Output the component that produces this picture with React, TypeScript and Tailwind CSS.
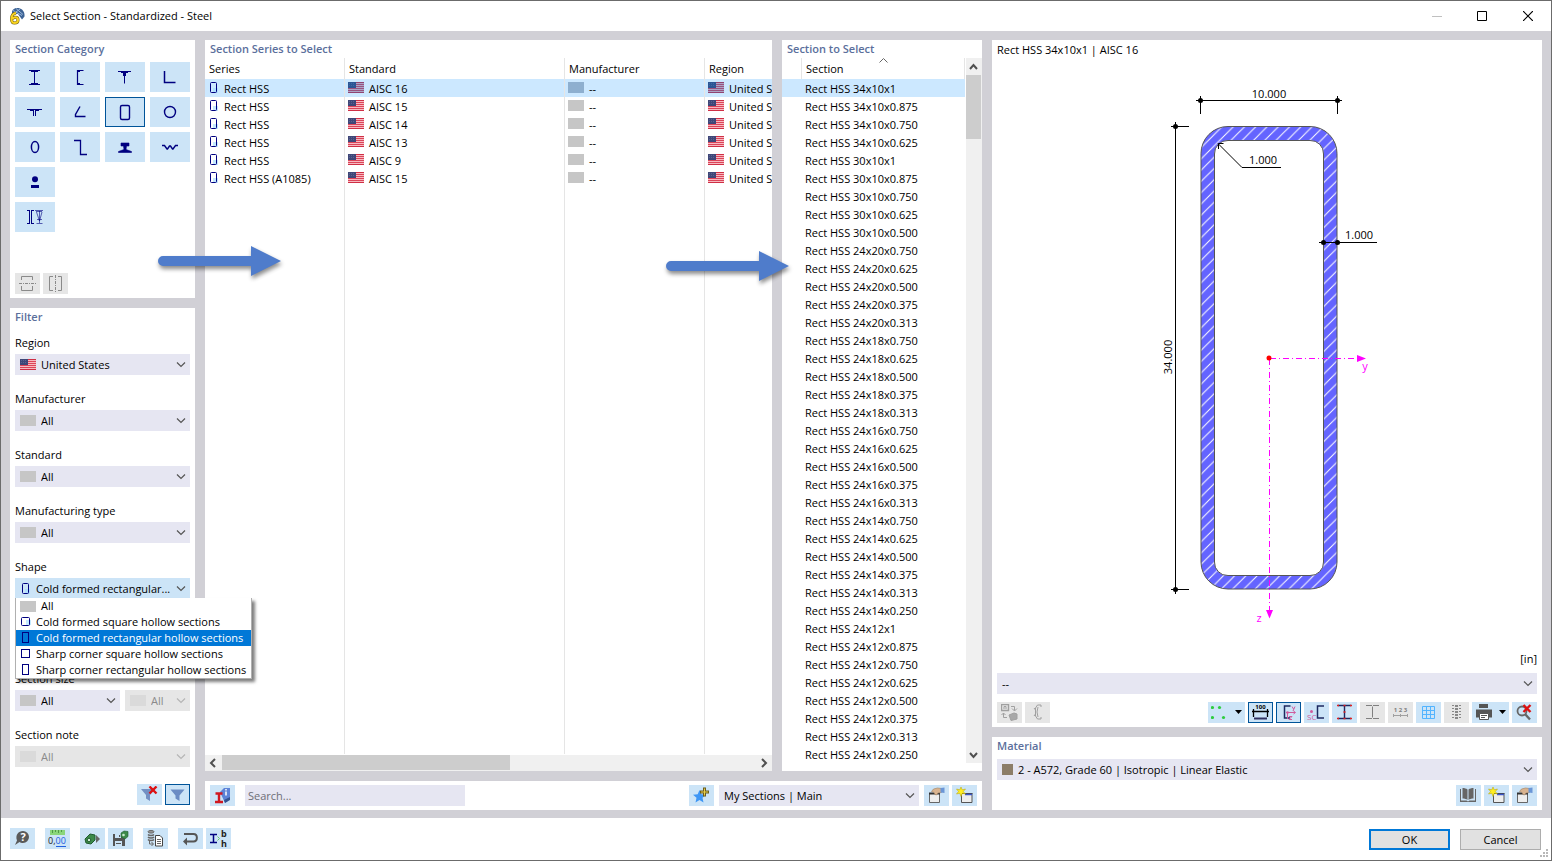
import React, { useState } from "react";

interface SeriesRecord {
  series: string;
  standard: string;
}

const seriesRecords: SeriesRecord[] = [
  { series: "Rect HSS", standard: "AISC 16" },
  { series: "Rect HSS", standard: "AISC 15" },
  { series: "Rect HSS", standard: "AISC 14" },
  { series: "Rect HSS", standard: "AISC 13" },
  { series: "Rect HSS", standard: "AISC 9" },
  { series: "Rect HSS (A1085)", standard: "AISC 15" },
];

const sizes = [
  "34x10x1", "34x10x0.875", "34x10x0.750", "34x10x0.625",
  "30x10x1", "30x10x0.875", "30x10x0.750", "30x10x0.625", "30x10x0.500",
  "24x20x0.750", "24x20x0.625", "24x20x0.500", "24x20x0.375", "24x20x0.313",
  "24x18x0.750", "24x18x0.625", "24x18x0.500", "24x18x0.375", "24x18x0.313",
  "24x16x0.750", "24x16x0.625", "24x16x0.500", "24x16x0.375", "24x16x0.313",
  "24x14x0.750", "24x14x0.625", "24x14x0.500", "24x14x0.375", "24x14x0.313", "24x14x0.250",
  "24x12x1", "24x12x0.875", "24x12x0.750", "24x12x0.625", "24x12x0.500", "24x12x0.375", "24x12x0.313", "24x12x0.250",
];

const NAVY = "#000080";

/* ---------- small pictures ---------- */

const Flag = ({ tinted = false }: { tinted?: boolean }) => (
  <svg width="16" height="11" viewBox="0 0 16 11" className="block shrink-0">
    <rect width="16" height="11" fill="#f7b9c0" />
    {[0, 2, 4, 6, 8, 10].map((y) => (
      <rect key={y} y={y} width="16" height="1" fill={y === 0 || y === 10 ? "#cf2f45" : "#dc4459"} />
    ))}
    <rect width="8" height="6" fill="#3f4778" />
    <path d="M1 1.5h6M1 3.5h6" stroke="#5a6290" strokeDasharray="1 1" />
    {tinted && <rect width="16" height="11" fill="#0078d7" opacity="0.3" />}
  </svg>
);

const Swatch = ({ color = "#c6c6c6" }: { color?: string }) => (
  <svg width="16" height="11" className="block shrink-0">
    <rect width="16" height="11" fill={color} />
  </svg>
);

const Hollow = ({ w, h, round = false, x = 0 }: { w: number; h: number; round?: boolean; x?: number }) => (
  <svg width={w + x + 2} height="12" className="block shrink-0">
    {round && <rect x={x + w - 4} y={h - 5} width="5" height="5" fill="#9fdcff" opacity="0.6" />}
    <rect x={x + 0.5} y={(11 - h) / 2 + 0.5} width={w - 1} height={h - 1} rx={round ? 1 : 0} fill="none" stroke={NAVY} />
  </svg>
);

const Chevron = ({ color = "#555" }: { color?: string }) => (
  <svg width="10" height="6" viewBox="0 0 10 6" fill="none" className="pointer-events-none absolute top-2 right-1">
    <path d="M1 0.5l4 4 4-4" stroke={color} strokeWidth="1.2" />
  </svg>
);

const HandWindow = () => (
  <svg width="17" height="17" viewBox="0 0 17 17" fill="none">
    <path d="M1.5 6.5h10v9h-10z" fill="#eee" stroke="#666" />
    <path d="M1 6.5h11" stroke="#333" strokeWidth="2" />
    <path d="M3.5 4.5l2-2.5 4-1 4 .5v4l-3.5.5L8.5 8 7 7.5l-1-2z" fill="#d9b38f" stroke="#a08060" strokeWidth="0.6" />
    <path d="M12.5 1L16.5 0.5v5.5l-4-.5z" fill="#6b96d6" />
  </svg>
);

const StarWindow = () => (
  <svg width="17" height="17" viewBox="0 0 17 17" fill="none">
    <path d="M5.5 6.5h10.5v9h-10.5z" fill="#eee" stroke="#555" />
    <path d="M6 6.5h10.5" stroke="#444" />
    <path d="M9 7.5h7" stroke="#3a56c8" strokeWidth="1.5" />
    <path d="M5 0l1.200 2.800L9.500 2 7.300 4.500 9.500 7 6.300 6.300 5 9.500 3.800 6.300 0.500 7l2-2.500L0.500 2l3.300.8z" fill="#ffee22" stroke="#b5a000" strokeWidth="0.5" />
  </svg>
);

const RedCross = ({ x, y }: { x: number; y: number }) => (
  <path d={`M${x} ${y}l7 7m0-7l-7 7`} stroke="#dd1111" strokeWidth="2.4" />
);

/* ---------- controls ---------- */

interface IconButtonProps {
  label: string;
  active?: boolean;
  disabled?: boolean;
  wide?: boolean;
  children: React.ReactNode;
}

const IconButton = ({ label, active, disabled, wide, children }: IconButtonProps) => (
  <button
    aria-label={label}
    disabled={disabled}
    className={`flex h-[21px] shrink-0 items-center justify-center ${wide ? "w-[37px] gap-1" : "w-[25px]"} ${
      disabled ? "bg-[#e6e6e6]" : "bg-[#cce4f7]"
    } ${active ? "border border-[#005499]" : ""}`}
  >
    {children}
    {wide && (
      <svg width="7" height="5" className="shrink-0">
        <path d="M0 0h7L3.5 4z" fill="#000" />
      </svg>
    )}
  </button>
);

interface PickerProps {
  id: string;
  label?: string;
  value: string;
  icon?: React.ReactNode;
  disabled?: boolean;
  open?: boolean;
  indent?: string;
}

const Picker = ({ id, label, value, icon, disabled, open, indent = "pl-[26px]" }: PickerProps) => (
  <div className="relative w-full">
    {icon && <span className="pointer-events-none absolute top-[5px] left-[5px]">{icon}</span>}
    <select
      id={id}
      aria-label={label}
      disabled={disabled}
      className={`block h-[21px] w-full appearance-none rounded-none pt-0.5 pr-4 opacity-100 outline-none ${indent} ${
        disabled ? "bg-[#e6e6e6] text-[#8a8a8a]" : open ? "bg-[#cce4f7]" : "bg-[#e6e6f2]"
      }`}
    >
      <option>{value}</option>
    </select>
    <Chevron color={disabled ? "#b5b5b5" : "#555"} />
  </div>
);

const Field = ({ id, title, children }: { id: string; title: string; children: React.ReactNode }) => (
  <div>
    <label htmlFor={id} className="block h-5 leading-[18px]">
      {title}
    </label>
    {children}
  </div>
);

const PanelTitle = ({ children }: { children: React.ReactNode }) => (
  <h2 className="h-[18px] shrink-0 px-[5px] leading-[18px] font-semibold text-[#5b6f9c]">{children}</h2>
);

/* ---------- section category ---------- */

const categories: { label: string; art: React.ReactNode }[] = [
  { label: "I sections", art: <path d="M5 3.5h11M5 17.5h11M7 4.5h7M7 16.5h7M10.5 4v13" /> },
  { label: "Channels", art: <path d="M14.5 3.5H8.5v14H14.5M9 4.5h2M9 16.5h2" strokeWidth="1.2" /> },
  { label: "T sections", art: <path d="M4 4.5h13M7 5.5h7M10.5 5v11.5M9.5 6v3M11.5 6v3" /> },
  { label: "Angles", art: <path d="M5.5 4v11.5H16.5" strokeWidth="1.5" /> },
  { label: "Double T", art: <path d="M3 7.5h15M6 8.5h3M12 8.5h3M9.5 8v6M11.5 8v6" /> },
  { label: "Bulb angles", art: <path d="M11 4.5L6.5 12.5v2H16.5" strokeWidth="1.4" /> },
  { label: "Hollow sections", art: <rect x="6.500" y="3.500" width="9" height="14" rx="1.500" strokeWidth="1.4" /> },
  { label: "Pipes", art: <circle cx="11" cy="10" r="5.5" strokeWidth="1.4" /> },
  { label: "Ovals", art: <ellipse cx="11" cy="10" rx="3.6" ry="5.6" strokeWidth="1.5" /> },
  { label: "Z sections", art: <path d="M5 3.5h6.5v14H18" strokeWidth="1.3" /> },
  { label: "Rails", art: <path d="M7 6h8v3h-2.500l-.5 3.500 5.500 2v1H4.500v-1l5.500-2-.5-3.500H7z" fill={NAVY} strokeWidth="0.6" /> },
  { label: "Corrugated sheets", art: <path d="M3 8.500h2.500l2.500 3.500h.5L10.500 9h1l2 3h.5l2.500-3.500H19" strokeWidth="1.4" /> },
  {
    label: "Round and flat bars",
    art: (
      <g fill={NAVY} stroke="none">
        <circle cx="11" cy="7.3" r="3" />
        <path d="M7 13h8v3H7z" />
      </g>
    ),
  },
  {
    label: "Built-up sections",
    art: (
      <>
        <path d="M3 3.5h3M7 3.5h3M3 16.5h3M7 16.5h3M5.5 4v12M7.5 4v12" />
        <path d="M11 3.5h8M12 4.5h6M12.5 5l3 9 2.5-9M15.5 4v12M12.5 16.5h6M13 12.5h5" opacity="0.6" />
      </>
    ),
  },
];

const CategoryPanel = () => {
  const [selected, setSelected] = useState(6);

  return (
    <section className="flex h-[258px] shrink-0 flex-col bg-white pb-1">
      <PanelTitle>Section Category</PanelTitle>
      <div className="mt-1 grid grid-cols-4 gap-[5px] px-[5px]">
        {categories.map((category, index) => (
          <button
            key={category.label}
            aria-label={category.label}
            onClick={() => setSelected(index)}
            className={`flex h-[30px] items-center justify-center bg-[#cce4f7] ${
              selected === index ? "border border-[#005499]" : ""
            } ${index === 13 ? "col-start-1" : ""}`}
          >
            <svg width="22" height="20" fill="none" stroke={NAVY}>
              {category.art}
            </svg>
          </button>
        ))}
      </div>
      <div className="mt-auto flex gap-[3px] px-[5px]">
        <IconButton label="Mirror about y" disabled>
          <svg width="17" height="17" fill="none" stroke="#8a8a8a">
            <path d="M2.5 5V1.5h11V5M2.5 11v4.5h11V11" />
            <path d="M0 8.5h17" strokeDasharray="3 1 1 1" />
          </svg>
        </IconButton>
        <IconButton label="Mirror about z" disabled>
          <svg width="17" height="17" fill="none" stroke="#8a8a8a">
            <path d="M6 1.5H2.5v14H6M11 1.5h3.5v14H11" />
            <path d="M8.5 0v17" strokeDasharray="3 1 1 1" />
          </svg>
        </IconButton>
      </div>
    </section>
  );
};

/* ---------- filter ---------- */

const shapes = [
  { name: "All", icon: <Swatch />, gap: "gap-[5px]" },
  { name: "Cold formed square hollow sections", icon: <Hollow w={9} h={9} round x={1} />, gap: "gap-1" },
  { name: "Cold formed rectangular hollow sections", icon: <Hollow w={7} h={11} x={2} />, gap: "gap-[5px]" },
  { name: "Sharp corner square hollow sections", icon: <Hollow w={9} h={9} x={1} />, gap: "gap-1" },
  { name: "Sharp corner rectangular hollow sections", icon: <Hollow w={7} h={11} x={2} />, gap: "gap-[5px]" },
];

const FilterPanel = () => (
  <section className="flex min-h-0 flex-1 flex-col bg-white pb-[5px]">
    <PanelTitle>Filter</PanelTitle>
    <div className="mt-2 flex flex-col gap-[15px] px-[5px]">
      <Field id="region" title="Region">
        <Picker id="region" value="United States" icon={<Flag />} />
      </Field>
      <Field id="manufacturer" title="Manufacturer">
        <Picker id="manufacturer" value="All" icon={<Swatch />} />
      </Field>
      <Field id="standard" title="Standard">
        <Picker id="standard" value="All" icon={<Swatch />} />
      </Field>
      <Field id="type" title="Manufacturing type">
        <Picker id="type" value="All" icon={<Swatch />} />
      </Field>
      <div className="relative mb-14">
        <Field id="shape" title="Shape">
          <Picker id="shape" value="Cold formed rectangular..." icon={<Hollow w={7} h={11} round x={2} />} indent="pl-[21px]" open />
        </Field>
        <ul
          role="listbox"
          aria-label="Shape"
          className="absolute top-10 left-0 z-20 border border-t-0 border-[#b0b0b0] bg-white shadow-[3px_3px_3px_rgba(0,0,0,0.5)]"
        >
          {shapes.map((shape, index) => (
            <li
              key={shape.name}
              role="option"
              aria-selected={index === 2}
              className={`flex h-4 items-center pr-[5px] pl-1 leading-4 whitespace-nowrap ${shape.gap} ${
                index === 2 ? "bg-[#0078d7] text-white" : ""
              }`}
            >
              {shape.icon}
              {shape.name}
            </li>
          ))}
        </ul>
      </div>
      <Field id="size-min" title="Section size">
        <div className="flex gap-[5px]">
          <div className="w-[105px]">
            <Picker id="size-min" value="All" icon={<Swatch />} />
          </div>
          <div className="flex-1">
            <Picker id="size-max" label="Largest section size" value="All" icon={<Swatch color="#dadada" />} disabled />
          </div>
        </div>
      </Field>
      <Field id="note" title="Section note">
        <Picker id="note" value="All" icon={<Swatch color="#dadada" />} disabled />
      </Field>
    </div>
    <div className="mt-auto flex justify-end gap-[3px] px-[5px]">
      <IconButton label="Clear filter">
        <svg width="17" height="17" fill="none">
          <path d="M0 3h14L9 9v6l-4-2.5V9z" fill="#7390c4" />
          <RedCross x={8.5} y={0.5} />
        </svg>
      </IconButton>
      <IconButton label="Filter" active>
        <svg width="15" height="15">
          <path d="M0.5 2.5h14L9.5 8.5v5.5l-4-2.5v-3z" fill="#6b8cc4" />
        </svg>
      </IconButton>
    </div>
  </section>
);

/* ---------- series and section lists ---------- */

const headCell = "h-[21px] border-r border-[#e5e5e5] px-1 text-left font-normal leading-[21px]";
const bodyCell = "h-[18px] border-r border-[#e5e5e5] pt-0.5 pl-[3px] leading-4";

const SeriesPanel = () => {
  const [selected, setSelected] = useState(0);

  return (
    <section className="flex min-w-0 flex-1 flex-col overflow-hidden bg-white">
      <PanelTitle>Section Series to Select</PanelTitle>
      <div className="min-h-0 flex-1 overflow-hidden pb-px">
        <table className="h-full w-[700px] table-fixed border-separate border-spacing-0 whitespace-nowrap">
          <colgroup>
            <col className="w-[140px]" />
            <col className="w-[220px]" />
            <col className="w-[140px]" />
            <col />
          </colgroup>
          <thead>
            <tr>
              {["Series", "Standard", "Manufacturer", "Region"].map((name) => (
                <th key={name} className={headCell}>
                  {name}
                </th>
              ))}
            </tr>
          </thead>
          <tbody>
            {seriesRecords.map((record, index) => (
              <tr key={index} onClick={() => setSelected(index)} className={selected === index ? "bg-[#cce8ff]" : ""}>
                <td className={bodyCell}>
                  <div className="flex gap-[5px] pl-0.5">
                    <span className="pt-px">
                      <Hollow w={7} h={11} round />
                    </span>
                    {record.series}
                  </div>
                </td>
                <td className={bodyCell}>
                  <div className="flex gap-[5px]">
                    <span className="pt-px">
                      <Flag tinted={selected === index} />
                    </span>
                    {record.standard}
                  </div>
                </td>
                <td className={bodyCell}>
                  <div className="flex gap-[5px]">
                    <span className="pt-px">
                      <Swatch color={selected === index ? "#8eafcf" : "#c6c6c6"} />
                    </span>
                    --
                  </div>
                </td>
                <td className={bodyCell}>
                  <div className="flex gap-[5px]">
                    <span className="pt-px">
                      <Flag tinted={selected === index} />
                    </span>
                    United States
                  </div>
                </td>
              </tr>
            ))}
            <tr>
              <td className="border-r border-[#e5e5e5]" />
              <td className="border-r border-[#e5e5e5]" />
              <td className="border-r border-[#e5e5e5]" />
              <td />
            </tr>
          </tbody>
        </table>
      </div>
      <div className="flex h-4 shrink-0 bg-[#f0f0f0]">
        <svg width="17" height="16" fill="none" stroke="#505050" strokeWidth="2">
          <path d="M10 4L6 8l4 4" />
        </svg>
        <div className="flex-1">
          <div className="h-[15px] w-[54%] bg-[#cdcdcd]" />
        </div>
        <svg width="17" height="16" fill="none" stroke="#505050" strokeWidth="2">
          <path d="M7 4l4 4-4 4" />
        </svg>
      </div>
    </section>
  );
};

const SectionPanel = () => {
  const [selected, setSelected] = useState(0);

  return (
    <section className="flex w-[200px] shrink-0 flex-col bg-white pb-2">
      <PanelTitle>Section to Select</PanelTitle>
      <div className="flex min-h-0 flex-1 justify-between">
        <div className="relative overflow-hidden">
          <svg width="9" height="5" fill="none" stroke="#666" className="absolute top-0 left-[97px]">
            <path d="M0.5 4.5l4-4 4 4" />
          </svg>
          <table className="w-[183px] table-fixed border-separate border-spacing-0 whitespace-nowrap">
            <colgroup>
              <col className="w-5" />
              <col />
            </colgroup>
            <thead>
              <tr>
                <th className={headCell} />
                <th className={headCell}>Section</th>
              </tr>
            </thead>
            <tbody>
              {sizes.map((size, index) => (
                <tr key={size} onClick={() => setSelected(index)} className={selected === index ? "bg-[#cce8ff]" : ""}>
                  <td className="h-[18px]" />
                  <td className="h-[18px] pt-0.5 pl-[3px] leading-4">Rect HSS {size}</td>
                </tr>
              ))}
            </tbody>
          </table>
        </div>
        <div className="flex w-4 flex-col bg-[#f0f0f0]">
          <svg width="16" height="17" fill="none" stroke="#505050" strokeWidth="2">
            <path d="M4 11l3.500-4 3.500 4" />
          </svg>
          <div className="min-h-0 flex-1">
            <div className="h-16 w-[15px] bg-[#cdcdcd]" />
          </div>
          <svg width="16" height="17" fill="none" stroke="#505050" strokeWidth="2">
            <path d="M4 7l3.500 4L11 7" />
          </svg>
        </div>
      </div>
    </section>
  );
};

const ListToolbar = () => (
  <div className="flex h-[29px] shrink-0 items-center bg-white px-[5px]">
    <IconButton label="Section info">
      <svg width="17" height="17" fill="none">
        <path d="M6 5l4-4h6v11l-5 4z" fill="#5d83d8" />
        <path d="M10 13l6-3v3l-5 3z" fill="#33518f" />
        <path d="M1.500 6.5h7M1 15h8M5 7v8" stroke="#d01820" strokeWidth="2.4" />
        <path d="M12 2v1.500M12 4.500v4" stroke="#fff" strokeWidth="1.5" />
      </svg>
    </IconButton>
    <input
      type="text"
      aria-label="Search"
      placeholder="Search..."
      className="ml-2.5 h-[21px] w-[220px] bg-[#e6e6f2] px-[3px] outline-none placeholder:text-[#6e6e76]"
    />
    <div className="ml-auto flex">
      <IconButton label="Add to favorites">
        <svg width="17" height="17" fill="none">
          <path d="M6.500 3l1.800 4.200 4.700.5-3.500 3.100 1 4.700-4-2.500-4 2.500 1-4.700L0 7.700l4.700-.5z" fill="#3f97f5" />
          <path d="M11.500 0.500v9M7 5h9" stroke="#6b5d1d" strokeWidth="3" />
          <path d="M11.500 1.500v7M8 5h7" stroke="#e8cf4a" />
        </svg>
      </IconButton>
      <div className="mx-[5px] w-[200px]">
        <Picker id="favorites" label="Favorites list" value="My Sections | Main" indent="pl-[5px]" />
      </div>
      <IconButton label="Manage lists">
        <HandWindow />
      </IconButton>
      <div className="w-[3px]" />
      <IconButton label="New list">
        <StarWindow />
      </IconButton>
    </div>
  </div>
);

/* ---------- preview ---------- */

const SectionDrawing = () => (
  <svg viewBox="0 0 550 590" className="min-h-0 w-full flex-1 text-[11px]" fill="none">
    <defs>
      <pattern id="hatch" width="11.260" height="11.260" x="4" patternUnits="userSpaceOnUse">
        <rect width="11.260" height="11.260" fill="#6464ff" />
        <path d="M-1 12.260L12.260 -1M-1 1L1 -1M10.260 12.260l2-2" stroke="#fff" />
      </pattern>
    </defs>
    <path
      fillRule="evenodd"
      fill="url(#hatch)"
      stroke="#555"
      d="M236 66.500H318A27 27 0 01345 93.500V502A27 27 0 01318 529H236A27 27 0 01209 502V93.500A27 27 0 01236 66.500ZM236 80.500A13 13 0 00222.500 94V502A13 13 0 00236 515.500H318A13 13 0 00331.500 502V94A13 13 0 00318 80.500Z"
    />
    <g stroke="#000">
      <path d="M204 40.500H350M208.500 36V54M345.500 36V54" />
      <path d="M183.500 62V534M179 66.500H197M179 529.500H197" />
      <path d="M226 83.500L250 107.500H289M226.500 89V83.500H231.500" />
      <path d="M327 182.500H385" />
    </g>
    <g fill="#000">
      <circle cx="208.500" cy="40.500" r="2.500" />
      <circle cx="345.500" cy="40.500" r="2.500" />
      <circle cx="183.500" cy="66.500" r="2.500" />
      <circle cx="183.500" cy="529.500" r="2.500" />
      <circle cx="331.500" cy="182.500" r="2.500" />
      <circle cx="345.500" cy="182.500" r="2.500" />
      <text x="277" y="38" textAnchor="middle">10.000</text>
      <text x="271" y="104" textAnchor="middle">1.000</text>
      <text x="367" y="179" textAnchor="middle">1.000</text>
      <text x="180" y="297" textAnchor="middle" transform="rotate(-90 180 297)">34.000</text>
    </g>
    <g stroke="#ff00ff">
      <path d="M278 298.500H365M277.500 299V550" strokeDasharray="6 3 1 3" />
    </g>
    <g fill="#ff00ff">
      <path d="M365 295l9 3.500-9 3.500zM274 550l3.500 8.500 3.500-8.500z" />
      <text x="373" y="310" textAnchor="middle">y</text>
      <text x="267" y="562" textAnchor="middle">z</text>
    </g>
    <circle cx="277" cy="298" r="2.500" fill="#f00" />
  </svg>
);

const PreviewPanel = () => (
  <section className="flex min-h-0 flex-1 flex-col bg-white px-[5px] pb-1">
    <h2 className="h-5 shrink-0 leading-5">Rect HSS 34x10x1 | AISC 16</h2>
    <div className="-mx-[5px] flex min-h-0 flex-1">
      <SectionDrawing />
    </div>
    <p className="mb-[5px] h-[18px] shrink-0 text-right leading-[18px]">[in]</p>
    <Picker id="cut" label="Section note" value="--" indent="pl-[5px]" />
    <div className="mt-2 flex gap-[3px]">
      <IconButton label="Import section" disabled>
        <svg width="17" height="17" fill="none" stroke="#a0a0a0">
          <path d="M0.500 0.500h7v6h-7z" strokeWidth="1.4" />
          <path d="M3 5V2.500h2V5M10 2.500h3.500v4M11 4.500l2.500 2.500 2.500-2.500M2.500 9v4.500H6M0.500 11l2-2 2 2" />
          <path d="M8 11l5-2 3 1v5l-6 1.500z" fill="#a8a8a8" />
        </svg>
      </IconButton>
      <IconButton label="Section stress" disabled>
        <svg width="17" height="17" fill="none" stroke="#a0a0a0">
          <path d="M12 3V1H8.500L6.500 4v8l2 3H12v-2M9 3l-1 5 1 5M5 4l1.500 2M5 12l1.500-2" />
        </svg>
      </IconButton>
      <div className="flex-1" />
      <IconButton label="Points" wide>
        <svg width="20" height="15" fill="#2ecc40">
          <circle cx="1.500" cy="2.500" r="1.600" />
          <circle cx="8.500" cy="2.500" r="1.600" />
          <circle cx="1.500" cy="12.500" r="1.600" />
          <circle cx="12.500" cy="12.500" r="1.600" />
        </svg>
      </IconButton>
      <IconButton label="Show dimensions" active>
        <svg width="17" height="17" fill="none" stroke="#000">
          <path d="M0 7.500h17M1.500 5v8M15.500 5v8" strokeWidth="1.3" />
          <path d="M2 14.500h13" stroke="#303060" strokeWidth="2" />
          <text x="8.500" y="5" textAnchor="middle" fill="#000" stroke="none" className="text-[6px] font-bold">100</text>
        </svg>
      </IconButton>
      <IconButton label="Show axes" active>
        <svg width="17" height="17" fill="none" stroke="#1c2960">
          <path d="M10.500 2H4.500v12H10" strokeWidth="1.5" />
          <path d="M6 8.500h9M7.500 8v7M13.500 7l2 1.500-2 1.500M12 2.500l1.500 2.500M15 2.500l-2 4.500M9 12.500h3l-3 3h3" stroke="#d05a9c" />
          <circle cx="7.500" cy="8.500" r="1.300" fill="#d05a9c" stroke="none" />
        </svg>
      </IconButton>
      <IconButton label="Show shear center">
        <svg width="19" height="17" fill="none" stroke="#1c2960">
          <path d="M17 2h-6.500v12H17" strokeWidth="1.5" />
          <circle cx="4.500" cy="7.500" r="1.500" fill="#d05a9c" stroke="none" />
          <text x="0" y="16" fill="#d05a9c" stroke="none" className="text-[8px]">SC</text>
        </svg>
      </IconButton>
      <IconButton label="Show stress points">
        <svg width="17" height="17" fill="none" stroke="#1c2960">
          <path d="M2 1.500h13M2 14.500h13M8.500 2v12" strokeWidth="1.4" />
          <path d="M1 1.500h2M14 1.500h2M1 14.500h2M14 14.500h2M7.500 8h2M7.500 1.500h2M7.500 14.500h2" stroke="#e02020" strokeWidth="1.4" />
        </svg>
      </IconButton>
      <IconButton label="Show parts" disabled>
        <svg width="17" height="17" fill="none" stroke="#808080">
          <path d="M2 1.500h6M9 1.500h6M2 14.500h6M9 14.500h6M8.500 2.500v11" />
        </svg>
      </IconButton>
      <IconButton label="Show numbering" disabled>
        <svg width="17" height="17" fill="none" stroke="#a0a0a0">
          <path d="M1 11.500h15M1.500 10v3M8.500 10v3M15.500 10v3" />
          <text x="8.500" y="8" textAnchor="middle" fill="#808080" stroke="none" className="text-[6px] font-bold">1 2 3</text>
        </svg>
      </IconButton>
      <IconButton label="Show grid">
        <svg width="15" height="15" fill="none" stroke="#52b4ff">
          <path d="M1.500 1.500h12v12h-12zM5.500 1.500v12M9.500 1.500v12M1.500 5.500h12M1.500 9.500h12" />
        </svg>
      </IconButton>
      <IconButton label="Show values" disabled>
        <svg width="15" height="17" fill="none" stroke="#888">
          <path d="M4 1v15M11 1v15" strokeDasharray="1 2" strokeWidth="2" />
          <path d="M7.500 1v15" strokeDasharray="2 1" strokeWidth="3" />
        </svg>
      </IconButton>
      <IconButton label="Print" wide>
        <svg width="20" height="17" className="shrink-0">
          <path d="M4 0h9v4H4zM1 5.500h16v8h-3v-3H4v3H1z" fill="#555" />
          <path d="M4.500 9.500h9v6h-9z" fill="#fff" stroke="#555" />
          <path d="M6 11.500h6M6 13.500h4" stroke="#555" />
        </svg>
      </IconButton>
      <IconButton label="Reset zoom">
        <svg width="17" height="17" fill="none">
          <circle cx="6" cy="7" r="4.500" stroke="#666" strokeWidth="1.8" />
          <path d="M9 10l5 5.500" stroke="#666" strokeWidth="2.4" />
          <RedCross x={7.5} y={1} />
        </svg>
      </IconButton>
    </div>
  </section>
);

const MaterialPanel = () => (
  <section className="shrink-0 bg-white pb-1">
    <PanelTitle>Material</PanelTitle>
    <div className="mt-1 px-[5px]">
      <Picker
        id="material"
        label="Material"
        value="2 - A572, Grade 60 | Isotropic | Linear Elastic"
        indent="pl-[21px]"
        icon={
          <svg width="11" height="11" className="block">
            <rect width="11" height="11" fill="#8c7d68" />
          </svg>
        }
      />
    </div>
    <div className="mt-[5px] flex justify-end gap-[3px] px-[5px]">
      <IconButton label="Material library">
        <svg width="17" height="17" fill="#666">
          <path d="M0 2h1v11.500h5.500l1.500 1 1.500-1H15V2h1v13H0z" />
          <path d="M2.500 1c2 0 3.800.5 5 1.500V13c-1-1-3-1.500-5-1.500zM13.500 1c-2 0-3.800.5-5 1.500V13c1-1 3-1.500 5-1.500z" />
        </svg>
      </IconButton>
      <IconButton label="New material">
        <StarWindow />
      </IconButton>
      <IconButton label="Edit material">
        <HandWindow />
      </IconButton>
    </div>
  </section>
);

/* ---------- window frame ---------- */

const TitleBar = () => (
  <header className="flex h-[30px] shrink-0 items-center bg-white">
    <svg width="17" height="18" viewBox="0 0 17 18" fill="none" className="ml-2 shrink-0">
      <path d="M3 5c0-3 4-5 8-3.500 3 1 5 4 4.500 8L13 12.500 9 7 3 7z" fill="#3c6294" />
      <path d="M4 3.500l9 5M7 1.500l7 6M5 6.500l6-4.500" stroke="#9ab8dc" />
      <path d="M7 6C4 6.500 2.500 9 2.500 12c0 3 1 4 3 4s3.500-1 3.500-3-1-2.700-2.500-2.700S4 11 3.500 12" stroke="#6b5a12" strokeWidth="3" />
      <path d="M7 6C4 6.500 2.500 9 2.500 12c0 3 1 4 3 4s3.500-1 3.500-3-1-2.700-2.500-2.700S4 11 3.500 12" stroke="#f7d21e" strokeWidth="2" />
    </svg>
    <h1 className="ml-1">Select Section - Standardized - Steel</h1>
    <div className="ml-auto flex">
      <button aria-label="Minimize" disabled className="flex h-[30px] w-[44px] items-center justify-center">
        <svg width="10" height="10" stroke="#c0c0c0">
          <path d="M0 5.500h10" />
        </svg>
      </button>
      <button aria-label="Maximize" className="flex h-[30px] w-[46px] items-center justify-center">
        <svg width="10" height="10" fill="none" stroke="#000">
          <path d="M0.500 0.500h9v9h-9z" />
        </svg>
      </button>
      <button aria-label="Close" className="flex h-[30px] w-[46px] items-center justify-center">
        <svg width="10" height="10" stroke="#000" strokeWidth="1.2">
          <path d="M0 0l10 10M10 0L0 10" />
        </svg>
      </button>
    </div>
  </header>
);

const Footer = () => (
  <footer className="relative flex h-[42px] shrink-0 items-start bg-white pt-2.5 pr-2.5 pl-[9px]">
    <IconButton label="Help">
      <svg width="17" height="17" fill="none">
        <path d="M9 1a6 6 0 110 12c-1.500 0-2.500-.3-3.500-1L1 15l2-4.500C1 5 4.500 1 9 1z" fill="#5a5a5a" />
        <text x="9" y="11" textAnchor="middle" fill="#fff" className="text-[11px] font-bold">?</text>
      </svg>
    </IconButton>
    <div className="ml-2.5">
      <IconButton label="Units and decimal places">
        <svg width="19" height="19" fill="none">
          <path d="M2 1h15v5H2z" fill="#8ad67a" />
          <path d="M4.500 1v3M7.500 1v2M10.500 1v3M13.500 1v2" stroke="#4f9a48" />
          <path d="M8 17.500h10" stroke="#2060e0" />
          <text x="0" y="15" fill="#222" className="text-[9px]">0,<tspan fill="#2060e0">00</tspan></text>
        </svg>
      </IconButton>
    </div>
    <div className="ml-2.5 flex gap-[3px]">
      <IconButton label="Load settings">
        <svg width="17" height="17" fill="none">
          <path d="M1 9l5-5 5 1v5l-4 4-5-1z" fill="#3c8a4a" stroke="#1f5c30" />
          <circle cx="5" cy="10" r="1.800" fill="#c9ecd0" stroke="#1f5c30" />
          <path d="M12 5l4 4-4 4z" fill="#666" />
        </svg>
      </IconButton>
      <IconButton label="Save settings">
        <svg width="17" height="17" fill="none">
          <path d="M1 4h11l1 1v11H1z" fill="#555" />
          <path d="M3 4h6v4H3zM3 11h7v5H3z" fill="#cce4f7" />
          <path d="M4 13.500h5M7.500 5v2" stroke="#555" />
          <path d="M9 3l3-2 4 .5v5L13 9 9 7z" fill="#3c8a4a" stroke="#1f5c30" strokeWidth="0.6" />
          <circle cx="11.500" cy="5" r="1.300" fill="#c9ecd0" />
        </svg>
      </IconButton>
    </div>
    <div className="ml-2.5">
      <IconButton label="Database">
        <svg width="17" height="17" fill="none" stroke="#666">
          <ellipse cx="4" cy="1.800" rx="3" ry="1.300" fill="#999" />
          <path d="M1 4.500c1 1.300 5 1.300 6 0M1 7c1 1.300 5 1.300 6 0M1 9.500c1 1.300 5 1.300 6 0" strokeWidth="1.4" />
          <path d="M2.500 11v3H6M4.500 12l2 2-2 2" />
          <path d="M8.500 5.500H13l2.500 2.500v8h-7z" fill="#fff" stroke="#444" />
          <path d="M10 9.500h4M10 11.500h4M10 13.500h4" />
        </svg>
      </IconButton>
    </div>
    <div className="ml-2.5 flex gap-[3px]">
      <IconButton label="Reset">
        <svg width="17" height="17" fill="none" stroke="#555" strokeWidth="2">
          <path d="M2 4h9.500c4.500 0 4.500 7.500 0 7.500H4" />
          <path d="M5 7.500l-4 4 4 4z" fill="#555" stroke="none" />
        </svg>
      </IconButton>
      <IconButton label="Parametric input">
        <svg width="19" height="19" fill="none">
          <path d="M1 5.500h7M1 13.500h7M4.500 6v7" stroke={NAVY} strokeWidth="1.5" />
          <path d="M8.500 7.500l2 2-2 2" stroke="#6cc86c" />
          <text x="12" y="8" fill="#222" className="text-[9px] font-bold">b</text>
          <text x="12" y="18" fill="#222" className="text-[9px] font-bold">h</text>
        </svg>
      </IconButton>
    </div>
    <div className="ml-auto flex gap-2.5 pt-px">
      <button className="h-[21px] w-[81px] border-2 border-[#0078d7] bg-[#e1e1e1] leading-[17px]">OK</button>
      <button className="h-[21px] w-[81px] border border-[#adadad] bg-[#e1e1e1] leading-[19px]">Cancel</button>
    </div>
    <svg width="10" height="10" fill="#b8b8b8" className="absolute right-0.5 bottom-0.5">
      <path d="M7 1h2v2H7zM7 4h2v2H7zM7 7h2v2H7zM4 4h2v2H4zM4 7h2v2H4zM1 7h2v2H1z" />
    </svg>
  </footer>
);

const Arrow = ({ place }: { place: string }) => (
  <svg
    width="126"
    height="32"
    className={`pointer-events-none absolute z-30 drop-shadow-[1px_3px_2px_rgba(0,0,0,0.45)] ${place}`}
  >
    <path d="M6 10H94V0l30 15-30 15V20H6A5 5 0 016 10z" fill="#4f7ccb" />
  </svg>
);

const App: React.FC = () => {
  return (
    <div className="relative flex h-screen min-h-[861px] flex-col border border-[#6b6b6b] bg-white font-['Open_Sans','Noto_Sans',sans-serif] text-[11px] text-black">
      <TitleBar />
      <main className="flex min-h-0 flex-1 gap-2.5 bg-[#d1d0d6] px-[9px] pt-[9px] pb-2">
        <div className="flex w-[185px] shrink-0 flex-col gap-2.5">
          <CategoryPanel />
          <FilterPanel />
        </div>
        <div className="flex min-w-0 flex-[777] flex-col gap-2.5">
          <div className="flex min-h-0 flex-1 gap-2.5">
            <SeriesPanel />
            <SectionPanel />
          </div>
          <ListToolbar />
        </div>
        <div className="flex min-w-0 flex-[550] flex-col gap-2.5">
          <PreviewPanel />
          <MaterialPanel />
        </div>
      </main>
      <Footer />
      <Arrow place="top-[245px] left-[156px]" />
      <Arrow place="top-[250px] left-[664px]" />
    </div>
  );
};

export default App;
